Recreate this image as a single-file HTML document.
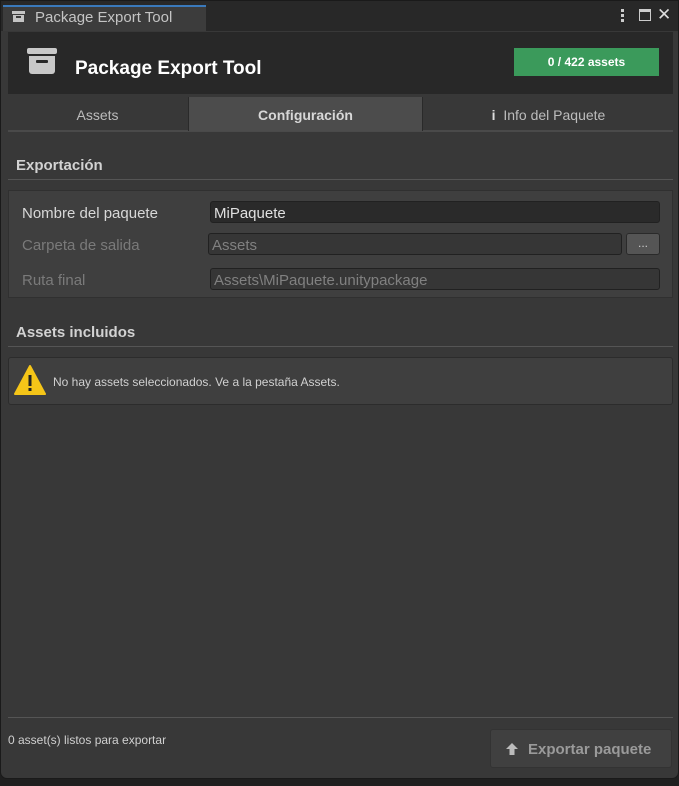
<!DOCTYPE html>
<html><head><meta charset="utf-8"><style>
*{box-sizing:border-box;margin:0;padding:0}
body{width:679px;height:786px;background:#1f1f1f;font-family:"Liberation Sans",sans-serif;position:relative;overflow:hidden;color:#c8c8c8}
.win{position:absolute;left:0;top:0;width:679px;height:779px;background:#383838;border:1px solid #1a1a1a;border-radius:0 0 7px 7px;overflow:hidden}
.tbar{position:absolute;left:0;top:0;width:679px;height:30px;background:#282828}
.ttab{position:absolute;left:2px;top:4px;width:203px;height:26px;background:#3c3c3c;border-top:2px solid #3a79bb}
.abs{position:absolute}
.hdr{position:absolute;left:7px;top:31px;width:665px;height:62px;background:#282828}
.badge{position:absolute;left:506px;top:16px;width:145px;height:28px;background:#3b9a5b;color:#fff;font-size:12px;font-weight:bold;text-align:center;line-height:28px}
.tabs{position:absolute;left:7px;top:96px;width:665px;height:35px;background:#383838;border-bottom:2px solid #4a4a4a}
.tab{position:absolute;top:0;height:34px;line-height:36px;text-align:center;font-size:14px;color:#bcbcbc}
.sec{position:absolute;left:15px;font-size:15px;font-weight:bold;color:#d2d2d2}
.line{position:absolute;left:7px;width:665px;height:1px;background:#555}
.box{position:absolute;left:7px;top:189px;width:665px;height:108px;background:#3f3f3f;border:1px solid #303030}
.lbl{position:absolute;left:13px;font-size:15px}
.fld{position:absolute;height:22px;border:1px solid #212121;border-radius:3px;font-size:15px;line-height:23px;padding-left:3px}
</style></head><body>
<div class="win">
<div class="tbar"></div>
<div class="ttab"></div>
<div class="abs" style="left:11px;top:10px;width:13px;height:3px;background:#c4c4c4"></div>
<div class="abs" style="left:12px;top:14px;width:11px;height:7px;background:#c4c4c4"></div>
<div class="abs" style="left:15px;top:15px;width:5px;height:2px;background:#3c3c3c"></div>
<div class="abs" style="left:34px;top:8px;font-size:15px;color:#c4c4c4">Package Export Tool</div>
<div class="abs" style="left:620px;top:8px;width:3px;height:3px;background:#ccc;box-shadow:0 5px 0 #ccc,0 10px 0 #ccc"></div>
<div class="abs" style="left:638px;top:8px;width:12px;height:12px;border:1.5px solid #ccc;border-top-width:3px"></div>
<div class="abs" style="left:656px;top:4px;font-size:17px;color:#ddd">✕</div>
<div class="hdr">
 <div class="abs" style="left:19px;top:16px;width:30px;height:6px;background:#c8c8c8;border-radius:2px"></div>
 <div class="abs" style="left:21px;top:24px;width:26px;height:18px;background:#c8c8c8;border-radius:0 0 3px 3px"></div>
 <div class="abs" style="left:28px;top:28px;width:12px;height:3px;background:#282828;border-radius:1px"></div>
 <div class="abs" style="left:67px;top:26px;font-size:19px;font-weight:bold;color:#fff">Package Export Tool</div>
 <div class="badge">0 / 422 assets</div>
</div>
<div class="tabs">
 <div class="tab" style="left:0;width:179px">Assets</div>
 <div class="tab" style="left:180px;width:235px;background:#4c4c4c;font-weight:bold;color:#d8d8d8;border-left:1px solid #2a2a2a;border-right:1px solid #2a2a2a">Configuración</div>
 <div class="tab" style="left:416px;width:249px"><b style="color:#ddd">i</b>&nbsp; Info del Paquete</div>
</div>
<div class="sec" style="top:156px">Exportación</div>
<div class="line" style="top:178px"></div>
<div class="box">
 <div class="lbl" style="top:14px;color:#d8d8d8">Nombre del paquete</div>
 <div class="fld" style="left:201px;top:10px;width:450px;background:#2a2a2a;color:#e0e0e0">MiPaquete</div>
 <div class="lbl" style="top:46px;color:#7a7a7a">Carpeta de salida</div>
 <div class="fld" style="left:199px;top:42px;width:414px;background:#363636;color:#808080">Assets</div>
 <div class="fld" style="left:617px;top:42px;width:34px;background:#555;border-color:#2a2a2a;color:#ccc;text-align:center;padding:0;font-size:12px;line-height:18px">...</div>
 <div class="lbl" style="top:81px;color:#7a7a7a">Ruta final</div>
 <div class="fld" style="left:201px;top:77px;width:450px;background:#363636;color:#808080">Assets\MiPaquete.unitypackage</div>
</div>
<div class="sec" style="top:323px">Assets incluidos</div>
<div class="line" style="top:345px"></div>
<div class="abs" style="left:7px;top:356px;width:665px;height:48px;background:#3f3f3f;border:1px solid #2c2c2c;border-radius:3px">
 <svg class="abs" style="left:5px;top:6px" width="32" height="32" viewBox="0 0 32 32"><path d="M16 2 L31 30 L1 30 Z" fill="#f5c518" stroke="#f5c518" stroke-linejoin="round" stroke-width="2"/><rect x="14.5" y="11" width="3" height="11" fill="#222"/><rect x="14.5" y="24" width="3" height="3" fill="#222"/></svg>
 <div class="abs" style="left:44px;top:17px;font-size:12px;color:#d0d0d0">No hay assets seleccionados. Ve a la pestaña Assets.</div>
</div>
<div class="line" style="top:716px"></div>
<div class="abs" style="left:7px;top:732px;font-size:12px;color:#d0d0d0">0 asset(s) listos para exportar</div>
<div class="abs" style="left:489px;top:728px;width:182px;height:39px;background:#404040;border:1px solid #333;border-radius:3px;color:#9a9a9a;font-size:15px;font-weight:bold;line-height:39px;padding-left:37px">Exportar paquete
 <svg class="abs" style="left:14px;top:12px" width="14" height="14" viewBox="0 0 14 14"><path d="M7 1 L13 7 L9.5 7 L9.5 13 L4.5 13 L4.5 7 L1 7 Z" fill="#bbb"/></svg>
</div>
</div>
</body></html>
